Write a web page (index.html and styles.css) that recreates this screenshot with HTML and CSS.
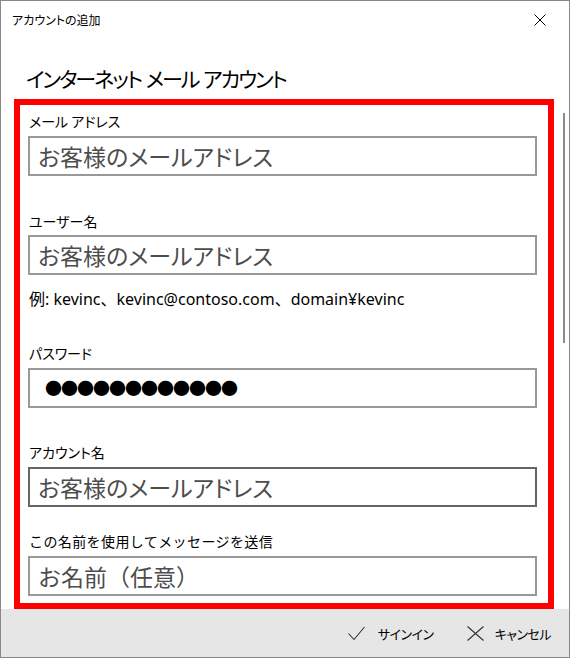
FILE: index.html
```html
<!DOCTYPE html>
<html lang="ja">
<head>
<meta charset="utf-8">
<title>アカウントの追加</title>
<link rel="stylesheet" href="styles.css">
</head>
<body>
<div class="window">
  <div class="titlebar">
    <span class="title">アカウントの追加</span>
    <svg class="close" width="12" height="12" viewBox="0 0 12 12"><path d="M0.5 0.5 L11.5 11.5 M11.5 0.5 L0.5 11.5" stroke="#000" stroke-width="1" fill="none"/></svg>
  </div>
  <div class="main">
    <h1 class="heading">インターネット メール アカウント</h1>
    <div class="highlight">
      <div class="field first">
        <div class="label">メール アドレス</div>
        <div class="input"><span class="ph">お客様のメールアドレス</span></div>
      </div>
      <div class="field f2">
        <div class="label">ユーザー名</div>
        <div class="input"><span class="ph">お客様のメールアドレス</span></div>
      </div>
      <div class="example">例: kevinc、kevinc@contoso.com、domain¥kevinc</div>
      <div class="field f3">
        <div class="label">パスワード</div>
        <div class="input pw"><span class="dots">●●●●●●●●●●●●</span></div>
      </div>
      <div class="field f4">
        <div class="label">アカウント名</div>
        <div class="input hover"><span class="ph">お客様のメールアドレス</span></div>
      </div>
      <div class="field f5">
        <div class="label wide">この名前を使用してメッセージを送信</div>
        <div class="input"><span class="ph full">お名前（任意）</span></div>
      </div>
    </div>
    <div class="scrollthumb"></div>
  </div>
  <div class="footer">
    <div class="btn">
      <svg class="icon" width="17" height="15" viewBox="0 0 17 15"><path d="M0.5 7.5 L6 13.5 L16.5 1" stroke="#333" stroke-width="1.1" fill="none"/></svg>
      <span>サインイン</span>
    </div>
    <div class="btn second">
      <svg class="icon" width="17" height="15" viewBox="0 0 17 15"><path d="M0.5 0.5 L16.5 14.5 M16.5 0.5 L0.5 14.5" stroke="#333" stroke-width="1.1" fill="none"/></svg>
      <span>キャンセル</span>
    </div>
  </div>
</div>
</body>
</html>
```

FILE: styles.css
```css
* { box-sizing: border-box; }
html, body { margin: 0; padding: 0; background: #fff; }
body {
  font-family: "Noto Sans CJK JP", sans-serif;
  color: #000;
}
.window {
  width: 570px;
  height: 658px;
  border: 1px solid #888;
  display: flex;
  flex-direction: column;
  background: #fff;
  overflow: hidden;
}
.titlebar {
  height: 37px;
  flex: none;
  display: flex;
  align-items: center;
  justify-content: space-between;
  padding: 0 23px 0 11px;
}
.title {
  font-size: 12px;
  line-height: 16px;
  font-feature-settings: "palt";
}
.close { display: block; }
.main {
  flex: 1;
  position: relative;
}
.heading {
  margin: 25px 0 6px 25px;
  font-size: 21px;
  letter-spacing: -2px;
  word-spacing: 2px;
  line-height: 30px;
  height: 30px;
  font-weight: normal;
  font-feature-settings: "palt";
}
.highlight {
  margin-left: 13px;
  width: 540px;
  height: 510px;
  border: 6px solid #ff0000;
  padding: 6px 11px 7px 8px;
}
.label {
  height: 20px;
  line-height: 20px;
  font-size: 14px;
  margin: 0 0 5px 1px;
  font-feature-settings: "palt";
}
.label.wide { font-feature-settings: normal; letter-spacing: 0.4px; }
.f2 { margin-top: 35px; }
.f2 .label { margin-bottom: 4px; }
.f3 { margin-top: 34px; }
.f4 { margin-top: 34px; }
.f5 { margin-top: 24px; }
.input {
  height: 40px;
  border: 2px solid #999;
  display: flex;
  align-items: center;
  padding-left: 8px;
}
.input.hover { border-color: #666; }
.ph {
  font-size: 23px;
  color: #4d4d4d;
  line-height: 30px;
  font-feature-settings: "palt";
}
.ph.full { font-feature-settings: normal; }
.input.pw { padding-left: 15px; }
.dots {
  font-size: 17px;
  letter-spacing: -1px;
  line-height: 20px;
  color: #000;
}
.example {
  margin: 14px 0 0 1px;
  height: 20px;
  line-height: 20px;
  font-size: 16px;
  font-family: "Noto Sans", "Noto Sans CJK JP", sans-serif;
}
.scrollthumb {
  position: absolute;
  right: 4px;
  top: 75px;
  width: 2px;
  height: 230px;
  background: #8c8c8c;
}
.footer {
  height: 48px;
  flex: none;
  background: #e6e6e6;
  display: flex;
  justify-content: flex-end;
  align-items: center;
  padding-right: 18px;
  font-size: 13px;
  letter-spacing: -0.5px;
  color: #000;
}
.btn {
  display: flex;
  align-items: center;
  gap: 13px;
  font-feature-settings: "palt";
}
.btn.second { margin-left: 33px; gap: 11px; }
.icon { display: block; }
```
